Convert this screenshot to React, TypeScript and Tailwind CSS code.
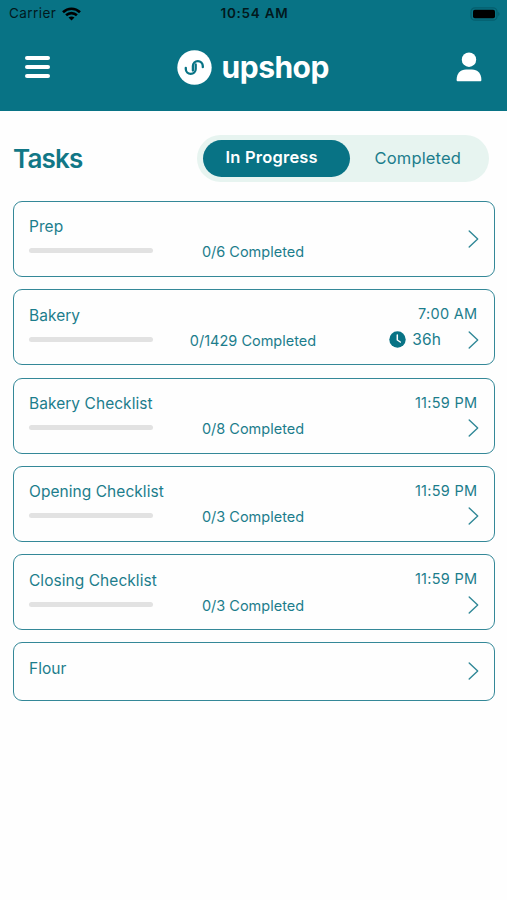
import { useState } from 'react'
import clsx from 'clsx'

interface Task {
  id: number
  name: string
  done?: number
  total?: number
  dueAt?: string
  duration?: string
}

const tasks: Task[] = [
  { id: 1, name: 'Prep', done: 0, total: 6 },
  { id: 2, name: 'Bakery', done: 0, total: 1429, dueAt: '7:00 AM', duration: '36h' },
  { id: 3, name: 'Bakery Checklist', done: 0, total: 8, dueAt: '11:59 PM' },
  { id: 4, name: 'Opening Checklist', done: 0, total: 3, dueAt: '11:59 PM' },
  { id: 5, name: 'Closing Checklist', done: 0, total: 3, dueAt: '11:59 PM' },
  { id: 6, name: 'Flour' },
]

export default function App() {
  const [tab, setTab] = useState<'progress' | 'completed'>('progress')

  return (
    <div className="min-h-[900px] w-full bg-[#fefefe] font-['Inter',sans-serif] text-[#1c7d8c]">
      <header className="h-[110.5px] bg-[#087385]">
        <StatusBar />
        <div className="flex h-[80px] items-center justify-between px-[25px]">
          <button aria-label="Menu" className="flex w-[25px] flex-col gap-[5px]">
            <span className="h-[4px] rounded-full bg-white" />
            <span className="h-[4px] rounded-full bg-white" />
            <span className="h-[4px] rounded-full bg-white" />
          </button>
          <Logo />
          <button aria-label="Profile">
            <svg width="26" height="30" viewBox="0 0 26 30" fill="#fff">
              <circle cx="13" cy="7.7" r="7.2" />
              <path d="M.6 28C.6 21.5 4.5 17.5 10 17.5h6c5.5 0 9.400 4 9.400 10.500 0 .8-.5 1.300-1.300 1.300H1.900C1.100 29.300.6 28.800.6 28z" />
            </svg>
          </button>
        </div>
      </header>

      <main className="pr-[12px] pl-[13px]">
        <div className="flex items-center justify-between pt-[24.5px] pr-[6px]">
          <h1 className="text-[26px] leading-[46px] font-semibold tracking-[-0.8px] text-[#117786]">Tasks</h1>
          <div className="flex h-[47px] w-[292px] items-center rounded-full bg-[#e7f4f0] px-[5.5px] text-[16.5px]">
            <button
              onClick={() => setTab('progress')}
              className={clsx(
                'h-[37.5px] w-[147.5px] rounded-full pr-[9px] pb-[3px] tracking-[0.2px]',
                tab === 'progress' && 'bg-[#087385] font-semibold text-white',
              )}
            >
              In Progress
            </button>
            <button
              onClick={() => setTab('completed')}
              className={clsx(
                'h-[37.5px] flex-1 rounded-full pl-[2px] tracking-[0.15px]',
                tab === 'completed' && 'bg-[#087385] font-semibold text-white',
              )}
            >
              Completed
            </button>
          </div>
        </div>

        <ul className="mt-[19px] flex flex-col gap-[12.3px]">
          {tasks.map((t) => (
            <TaskCard key={t.id} task={t} />
          ))}
        </ul>
      </main>
    </div>
  )
}

function TaskCard({ task }: { task: Task }) {
  const hasProgress = task.total !== undefined

  return (
    <li
      className={clsx(
        'grid grid-cols-[150px_1fr_150px] rounded-[9px] border border-[#348898] px-[15px]',
        hasProgress ? 'h-[76px]' : 'h-[58.5px]',
      )}
    >
      <div className="pt-[14.4px]">
        <p className="text-[15.5px] leading-[22px] tracking-[0.05px] whitespace-nowrap">{task.name}</p>
        {hasProgress && (
          <div className="mt-[10px] h-[5px] w-[124px] overflow-hidden rounded-full bg-[#e2e2e2]">
            <div
              className="h-full bg-[#087385]"
              style={{ width: `${((task.done ?? 0) / (task.total ?? 1)) * 100}%` }}
            />
          </div>
        )}
      </div>
      <div className="pt-[39.4px] pr-[2px] text-center text-[14.5px] leading-[22px] whitespace-nowrap">
        {hasProgress && `${task.done}/${task.total} Completed`}
      </div>
      <div className={clsx('flex flex-col items-end', task.dueAt ? 'pt-[13px]' : 'justify-center pb-px')}>
        {task.dueAt && <p className="pr-[1.5px] text-[14.5px] leading-[22px] tracking-[0.3px]">{task.dueAt}</p>}
        <div className={clsx('flex items-center', task.dueAt && 'mt-[4.6px]')}>
          {task.duration && (
            <span className="mr-[27px] flex items-center gap-[6px] pb-px text-[15.5px] leading-[20px] tracking-[0.1px]">
              <ClockIcon />
              {task.duration}
            </span>
          )}
          <svg width="11" height="20" viewBox="0 0 11 20" fill="none" stroke="#2f8796" strokeWidth="1.4" strokeLinecap="round" strokeLinejoin="round">
            <path d="M1.200 2 9.700 10 1.200 18" />
          </svg>
        </div>
      </div>
    </li>
  )
}

function StatusBar() {
  return (
    <div className="grid h-[27px] grid-cols-3 items-center pr-[7px] pl-[9px] text-[13.5px] text-[#02191d]">
      <div className="flex items-center gap-[5.5px]">
        <span className="tracking-[0.45px]">Carrier</span>
        <svg width="19" height="14" viewBox="0 0 19 14" fill="none" stroke="#000" strokeWidth="2.6">
          <path d="M1 5.200C5.800.6 13.200.6 18 5.200" />
          <path d="M4.100 8.300C7.200 5.400 11.800 5.400 14.900 8.300" />
          <path d="M9.500 13.600 6.500 10.600C8.200 9.100 10.800 9.100 12.500 10.600z" fill="#000" stroke="none" />
        </svg>
      </div>
      <span className="text-center font-semibold tracking-[0.75px]">10:54 AM</span>
      <svg className="justify-self-end" width="31" height="14" viewBox="0 0 31 14">
        <rect x="2" y=".8" width="26" height="12.4" rx="4" fill="none" stroke="#055f6e" strokeWidth="1.3" />
        <rect x="4" y="2.8" width="22" height="8.4" rx="1.8" fill="#000" />
        <path d="M29.200 4.800c1.800.8 1.800 3.600 0 4.400z" fill="#055f6e" />
      </svg>
    </div>
  )
}

function Logo() {
  return (
    <div className="flex items-center gap-[9.5px]">
      <svg width="35" height="35" viewBox="0 0 35 35">
        <circle cx="17.500" cy="17.500" r="17.200" fill="#fff" />
        <g fill="none" stroke="#087385" strokeWidth="2.3" strokeLinecap="round">
          <path d="M8.800 17.800v1.200a4.950 4.950 0 0 0 9.900 0v-4.500" />
          <path d="M15.900 20.500V16a4.950 4.950 0 0 1 9.900 0v1.200" />
        </g>
      </svg>
      <span className="text-[30px] leading-[35px] font-bold tracking-[-0.5px] text-white">upshop</span>
    </div>
  )
}

function ClockIcon() {
  return (
    <svg width="17" height="17" viewBox="0 0 17 17">
      <circle cx="8.500" cy="8.500" r="8.200" fill="#087385" />
      <path d="M8.300 4v5l3 2" fill="none" stroke="#fff" strokeWidth="1.5" strokeLinecap="round" strokeLinejoin="round" />
    </svg>
  )
}
